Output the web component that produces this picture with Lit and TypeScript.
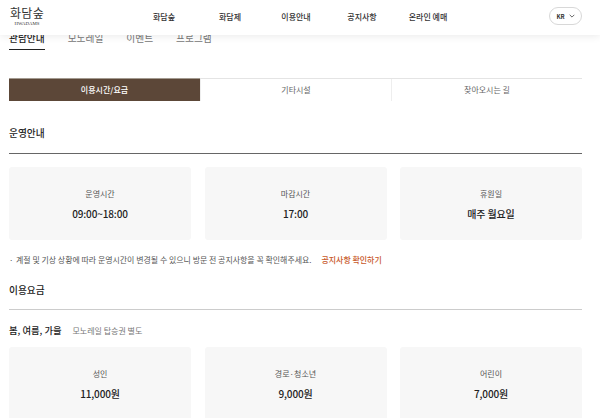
import { LitElement, html, css } from "lit";
import { customElement } from "lit/decorators.js";

@customElement("app-root")
export class AppRoot extends LitElement {
  static styles = css`
    :host { display: block; position: relative; width: 600px; height: 418px; overflow: hidden; background: #fff; font-family: "Noto Sans CJK KR", "Noto Sans", sans-serif; color: #222; }
    * { box-sizing: border-box; }
    header { position: absolute; top: 0; left: 0; right: 0; height: 35px; background: #fff; box-shadow: 0 1px 8px rgba(0,0,0,.09); z-index: 2; }
    .logo { position: absolute; left: 9px; top: 5px; width: 36px; display: flex; flex-direction: column; align-items: center; }
    .logo b { font: 400 12px/15px "Noto Sans CJK KR", serif; letter-spacing: .3px; color: #333; white-space: nowrap; }
    .logo small { font: 400 4.8px/6px "Liberation Serif", serif; color: #333; margin-top: 1px; }
    nav { position: absolute; left: 131px; top: 0; height: 32px; display: grid; grid-template-columns: repeat(5, 66px); align-items: center; text-align: center; font-size: 8px; font-weight: 500; color: #333; white-space: nowrap; }
    .lang { position: absolute; left: 549px; top: 7px; width: 33px; height: 18px; border: 1px solid #d8d8d8; border-radius: 9px; display: flex; align-items: center; justify-content: center; gap: 4px; font-size: 6px; font-weight: 700; color: #333; }
    main { padding: 0 18px 0 9px; }
    .tabs { display: flex; gap: 23px; height: 50px; padding-top: 27px; font-size: 9.7px; color: #777; line-height: 22px; }
    .tabs span { height: 23px; white-space: nowrap; }
    .tabs .on { color: #222; font-weight: 500; border-bottom: 1px solid #222; }
    .seg { display: grid; grid-template-columns: repeat(3, 1fr); margin-top: 28px; height: 23px; border-top: 1px solid #e4e4e4; font-size: 8px; color: #666; text-align: center; line-height: 22px; }
    .seg div + div { border-left: 1px solid #eee; }
    .seg .on { background: #5c4738; color: #fff; font-weight: 500; border-top: 1px solid #a39a90; margin-top: -1px; height: 23px; }
    h2 { margin: 0; font-size: 9.7px; font-weight: 500; line-height: 14px; color: #222; }
    .h1 { margin-top: 25px; padding-bottom: 13px; border-bottom: 1px solid #666; }
    .h2 { margin-top: 17px; padding-bottom: 12px; border-bottom: 1px solid #ccc; }
    .cards { display: grid; grid-template-columns: repeat(3, 1fr); gap: 13.5px; }
    .c1 { margin-top: 13px; }
    .card { height: 73px; background: #f7f7f7; border-radius: 3px; display: flex; flex-direction: column; align-items: center; padding-top: 21px; }
    .card small { font-size: 8px; line-height: 12px; color: #555; }
    .card strong { font-size: 10px; line-height: 14px; font-weight: 500; color: #222; margin-top: 6.5px; letter-spacing: -.15px; }
    .note { margin-top: 14px; font-size: 7.95px; line-height: 12px; color: #555; display: flex; white-space: nowrap; }
    .note i { font-style: normal; width: 7px; }
    .note a { color: #c8582a; font-weight: 500; margin-left: 10px; }
    .sub { display: flex; align-items: center; gap: 11px; margin-top: 13px; height: 14px; font-size: 9.3px; font-weight: 500; }
    .sub em { font-style: normal; font-size: 8px; font-weight: 400; color: #777; }
    .c2 { margin-top: 10px; }
  `;

  render() {
    const nav = ["화담숲", "화담제", "이용안내", "공지사항", "온라인 예매"];
    return html`
      <header>
        <div class="logo"><b>화담숲</b><small>HWADAMS</small></div>
        <nav>${nav.map((n) => html`<span>${n}</span>`)}</nav>
        <div class="lang">KR
          <svg width="6" height="4" viewBox="0 0 6 4" fill="none" stroke="#444" stroke-width=".8"><path d="M.7.8 3 3.1 5.3.8"/></svg>
        </div>
      </header>
      <main>
        <div class="tabs"><span class="on">관람안내</span><span>모노레일</span><span>이벤트</span><span>프로그램</span></div>
        <div class="seg"><div class="on">이용시간/요금</div><div>기타시설</div><div>찾아오시는 길</div></div>
        <h2 class="h1">운영안내</h2>
        <div class="cards c1">
          <div class="card"><small>운영시간</small><strong>09:00~18:00</strong></div>
          <div class="card"><small>마감시간</small><strong>17:00</strong></div>
          <div class="card"><small>휴원일</small><strong>매주 월요일</strong></div>
        </div>
        <div class="note"><i>·</i>계절 및 기상 상황에 따라 운영시간이 변경될 수 있으니 방문 전 공지사항을 꼭 확인해주세요.<a>공지사항 확인하기</a></div>
        <h2 class="h2">이용요금</h2>
        <div class="sub">봄, 여름, 가을<em>모노레일 탑승권 별도</em></div>
        <div class="cards c2">
          <div class="card"><small>성인</small><strong>11,000원</strong></div>
          <div class="card"><small>경로·청소년</small><strong>9,000원</strong></div>
          <div class="card"><small>어린이</small><strong>7,000원</strong></div>
        </div>
      </main>
    `;
  }
}
